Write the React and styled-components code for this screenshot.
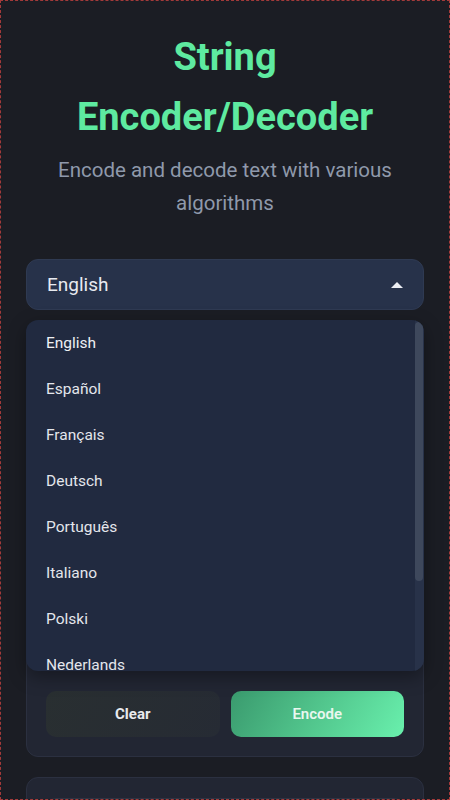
import React, { useState } from "react";
import styled, { createGlobalStyle } from "styled-components";

const GlobalStyle = createGlobalStyle`
  * { box-sizing: border-box; }
  body {
    margin: 0;
    background: #1b1d24;
    font-family: Roboto, "Noto Sans", "Liberation Sans", sans-serif;
    color: #e6e8ee;
  }
`;

const Page = styled.div`
  height: 800px;
  overflow: hidden;
  border: 1px dashed #a33a3a;
  padding: 26px 25px 0;
  background: #1b1d24;
`;

const Title = styled.h1`
  margin: 0;
  text-align: center;
  font-size: 38px;
  line-height: 60px;
  font-weight: 700;
  color: #5eeaa0;
`;

const Subtitle = styled.p`
  margin: 7px 0 0;
  text-align: center;
  font-size: 20.5px;
  line-height: 33px;
  color: #8f99ab;
`;

const SelectWrap = styled.div`
  position: relative;
  margin-top: 39px;
`;

const Trigger = styled.button`
  width: 100%;
  height: 51px;
  display: flex;
  align-items: center;
  justify-content: space-between;
  padding: 0 20px;
  background: #27324a;
  border: 1px solid #2f3a52;
  border-radius: 12px;
  color: #e8eaf0;
  font-family: inherit;
  font-size: 19px;
  cursor: pointer;
`;

const Caret = styled.span`
  width: 0;
  height: 0;
  border-left: 6px solid transparent;
  border-right: 6px solid transparent;
  border-bottom: 6px solid #eceef3;
`;

const Menu = styled.div`
  position: absolute;
  top: 61px;
  left: 0;
  right: 0;
  z-index: 10;
  height: 351px;
  overflow: hidden;
  background: #212a40;
  border-radius: 12px;
  box-shadow: 0 6px 18px rgba(0, 0, 0, 0.35);
`;

const OptionList = styled.ul`
  margin: 0;
  padding: 0 9px 14px 0;
  list-style: none;
`;

const Track = styled.div`
  position: absolute;
  top: 0;
  right: 0;
  bottom: 0;
  width: 9px;
  background: #283249;
`;

const Thumb = styled.div`
  position: absolute;
  top: 2px;
  right: 1px;
  width: 8px;
  height: 259px;
  border-radius: 4px;
  background: #3e485c;
`;

const Option = styled.li`
  height: 46px;
  display: flex;
  align-items: center;
  padding: 0 20px;
  font-size: 15.5px;
  color: ${(props) => (props.active ? "#eef0f4" : "#e4e6ec")};
  cursor: pointer;
`;

const Card = styled.div`
  margin-top: ${(props) => props.gap}px;
  background: #222633;
  border: 1px solid #2b3040;
  border-radius: 12px;
  padding: 20px 19px 19px;
`;

const TextArea = styled.textarea`
  display: block;
  width: 100%;
  height: 320px;
  resize: none;
  background: #1c2030;
  border: 1px solid #2e3444;
  border-radius: 10px;
  color: #e6e8ee;
`;

const Buttons = styled.div`
  display: grid;
  grid-template-columns: 1fr 1fr;
  gap: 11px;
  margin-top: 20px;
`;

const Action = styled.button`
  height: 46px;
  border: none;
  border-radius: 10px;
  font-family: inherit;
  font-size: 15px;
  font-weight: ${(props) => (props.primary ? 600 : 700)};
  cursor: pointer;
  color: ${(props) => (props.primary ? "#e9f7ef" : "#e8eaed")};
  background: ${(props) =>
    props.primary
      ? "linear-gradient(120deg, #3a9a6e 0%, #52c68d 50%, #69f0ad 100%)"
      : "linear-gradient(120deg, #292f31 0%, #262b34 100%)"};
`;

const languages = [
  "English",
  "Español",
  "Français",
  "Deutsch",
  "Português",
  "Italiano",
  "Polski",
  "Nederlands",
  "Русский",
  "Türkçe",
];

export default function App() {
  const [lang, setLang] = useState("English");
  const [open, setOpen] = useState(true);

  return (
    <>
      <GlobalStyle />
      <Page>
        <Title>
          String
          <br />
          Encoder/Decoder
        </Title>
        <Subtitle>Encode and decode text with various algorithms</Subtitle>

        <SelectWrap>
          <Trigger onClick={() => setOpen(!open)}>
            {lang}
            <Caret />
          </Trigger>
          {open && (
            <Menu>
              <OptionList>
                {languages.map((item) => (
                  <Option
                    key={item}
                    active={item === lang}
                    onClick={() => {
                      setLang(item);
                      setOpen(false);
                    }}
                  >
                    {item}
                  </Option>
                ))}
              </OptionList>
              <Track>
                <Thumb />
              </Track>
            </Menu>
          )}

          <Card gap={20}>
            <TextArea aria-label="Input" />
            <Buttons>
              <Action>Clear</Action>
              <Action primary>Encode</Action>
            </Buttons>
          </Card>
        </SelectWrap>

        <Card gap={20}>
          <TextArea aria-label="Output" />
        </Card>
      </Page>
    </>
  );
}
